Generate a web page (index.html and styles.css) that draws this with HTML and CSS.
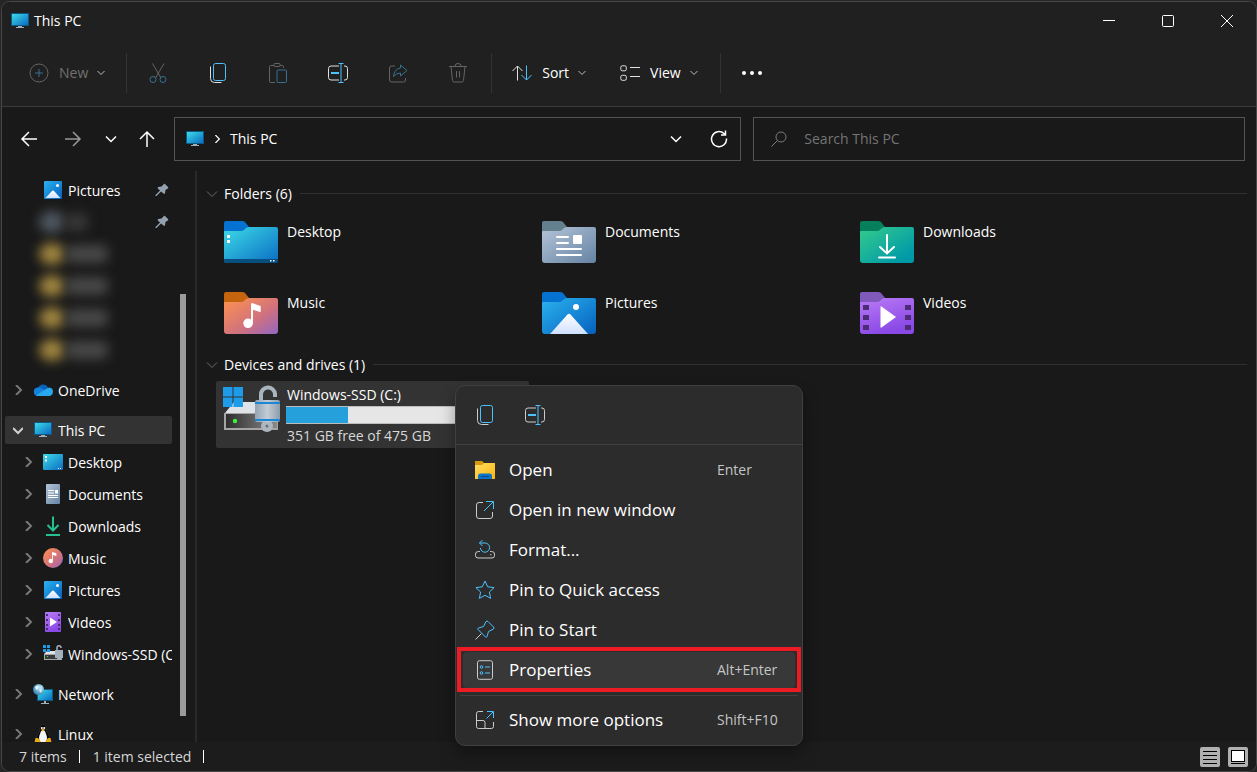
FILE: index.html
```
<!DOCTYPE html>
<html lang="en">
	<head>
		<meta charset="utf-8">
		<title>This PC</title>
		<link rel="stylesheet" href="styles.css">
	</head>
	<body>
		<svg class="sprite" width="0" height="0" aria-hidden="true">
			<defs>
				<linearGradient id="g-screen" x1="0" y1="0" x2="1" y2="1"><stop offset="0" stop-color="#3ddbe6"/><stop offset="1" stop-color="#0a6cc4"/></linearGradient>
				<linearGradient id="g-doc" x1="0" y1="0" x2="1" y2="1"><stop offset="0" stop-color="#b4c4d8"/><stop offset="1" stop-color="#6583a3"/></linearGradient>
				<linearGradient id="g-down" x1="0" y1="0" x2="1" y2="1"><stop offset="0" stop-color="#35cc8c"/><stop offset=".85" stop-color="#0099a8"/></linearGradient>
				<linearGradient id="g-music" x1="0" y1="0" x2="1" y2="1"><stop offset="0" stop-color="#ff944d"/><stop offset=".6" stop-color="#d0717e"/><stop offset="1" stop-color="#9366c4"/></linearGradient>
				<linearGradient id="g-pic" x1="0" y1="0" x2="1" y2="1"><stop offset="0" stop-color="#2bb3f0"/><stop offset="1" stop-color="#0560bd"/></linearGradient>
				<linearGradient id="g-video" x1="0" y1="0" x2=".4" y2="1"><stop offset="0" stop-color="#b97bf5"/><stop offset="1" stop-color="#8a48e6"/></linearGradient>
				<linearGradient id="g-mount" x1="0" y1="0" x2="0" y2="1"><stop offset="0" stop-color="#fff"/><stop offset="1" stop-color="#cfe0ff"/></linearGradient>
				<linearGradient id="g-folder" x1="0" y1="0" x2="1" y2="1"><stop offset="0" stop-color="#ffdc66"/><stop offset="1" stop-color="#fbb60c"/></linearGradient>
				<linearGradient id="g-disk" x1="0" y1="0" x2="1" y2="0"><stop offset="0" stop-color="#2e2e2e"/><stop offset="1" stop-color="#8a8a8a"/></linearGradient>
				<linearGradient id="g-lock" x1="0" y1="0" x2="1" y2="0"><stop offset="0" stop-color="#94a3b3"/><stop offset=".5" stop-color="#c3ccd6"/><stop offset="1" stop-color="#8c9cac"/></linearGradient>
				<radialGradient id="g-globe" cx=".65" cy=".35" r=".7"><stop offset="0" stop-color="#c9ecfb"/><stop offset="1" stop-color="#2f7fb0"/></radialGradient>
			</defs>

			<symbol id="i-pc" viewBox="0 0 18 16">
				<path fill="#0b5a86" d="M0 0h18v13H0z"/>
				<path fill="url(#g-screen)" d="M1 1h16v11H1z"/>
				<path fill="#9fb0bd" d="M7 13h4v1h2v1H5v-1h2z"/>
			</symbol>
			<symbol id="i-chev" viewBox="0 0 8 8"><path d="M.5 2 4 5.500 7.500 2"/></symbol>
			<symbol id="i-right" viewBox="0 0 10 10"><path d="M3 0 8 5 3 10"/></symbol>

			<symbol id="i-new" viewBox="0 0 20 20">
				<circle cx="10" cy="10" r="9"/><path class="b" d="M10 6v8M6 10h8"/>
			</symbol>
			<symbol id="i-cut" viewBox="0 0 20 20">
				<path d="M4.500 .5 13 15M16 .5 7.500 15"/>
				<circle class="b" cx="5" cy="16.500" r="3"/><circle class="b" cx="15" cy="16.500" r="3"/>
			</symbol>
			<symbol id="i-copy" viewBox="0 0 20 20">
				<path d="M2.500 3.500v12q0 4 4 4h7"/><rect class="b" x="5.500" y=".5" width="12" height="17" rx="2"/>
			</symbol>
			<symbol id="i-paste" viewBox="0 0 20 20">
				<path d="M6 2.500H2.500q-1 0-1 1v15q0 1 1 1H7M12 2.500h2.500q1 0 1 1V5M7 .5h4q1 0 1 1v1q0 1-1 1H7q-1 0-1-1v-1q0-1 1-1z"/>
				<rect class="b" x="9" y="7" width="9.500" height="12.500" rx="1"/>
			</symbol>
			<symbol id="i-rename" viewBox="0 0 20 20">
				<path d="M11 3H3Q.5 3 .5 5.500v9Q.5 17 3 17h8M16 3h1q2.500 0 2.500 2.500v9Q19.500 17 17 17h-1"/>
				<path class="b" d="M10.500.5h5M10.500 19.500h5M13 .5v19"/><path class="b" stroke-width="2" d="M3 10h8"/>
			</symbol>
			<symbol id="i-share" viewBox="0 0 20 20">
				<path d="M7 3H3.500Q1.500 3 1.500 5v12q0 2 2 2h12q2 0 2-2v-2"/>
				<path class="b" d="M12.500 2 19 7.500 12.500 13v-3Q8 10 5.500 13.500 6 6 12.500 5z"/>
			</symbol>
			<symbol id="i-trash" viewBox="0 0 20 20">
				<path d="M1 3.500h18M7 3q0-2.500 3-2.500t3 2.500M3 3.500l1.500 14q.2 1.500 1.700 1.500h7.600q1.500 0 1.700-1.500l1.500-14M8.500 8v6.500M11.500 8v6.500"/>
			</symbol>
			<symbol id="i-sort" viewBox="0 0 20 20">
				<path d="M5.500 17.500V3M.5 8l5-5 5 5"/><path class="b" d="M14.500 2.500V17M9.500 12l5 5 5-5"/>
			</symbol>
			<symbol id="i-view" viewBox="0 0 20 20">
				<rect x=".8" y="2.800" width="5.500" height="5" rx="1.500"/><rect x=".8" y="12.300" width="5.500" height="5" rx="1.500"/>
				<path d="M10 4.500h10M10 13.500h10"/>
			</symbol>
			<symbol id="i-dots" viewBox="0 0 20 20">
				<g fill="#fff" stroke="none"><circle cx="2" cy="10" r="2"/><circle cx="10" cy="10" r="2"/><circle cx="18" cy="10" r="2"/></g>
			</symbol>
			<symbol id="i-arrow" viewBox="0 0 18 18"><path d="M17 9H2M9 2 2 9l7 7"/></symbol>
			<symbol id="i-down" viewBox="0 0 14 14"><path d="M2 4.500 7 9.500 12 4.500"/></symbol>
			<symbol id="i-refresh" viewBox="0 0 18 18"><path d="M16.500 8.500A7.500 7.500 0 1 1 14 3.500l1.500 1.500M15.500.5V5H11"/></symbol>
			<symbol id="i-search" viewBox="0 0 16 16"><circle cx="10" cy="6" r="5"/><path d="M6.500 9.500.5 15.500"/></symbol>
			<symbol id="i-pin" viewBox="0 0 14 14">
				<path fill="#93a2ae" d="M8.500 1.500Q9 .5 10 1l3 3q.8 1-.2 1.500L10.500 7 10 10q-.5 1.500-1.500.5L6 8.500 1.500 13H.5v-1L5 7.500 2.800 5.500q-.8-1 .5-1.500l3.200-.5z"/>
			</symbol>

			<!-- folder shapes, the colours come from the tile -->
			<symbol id="i-folder" viewBox="0 0 54 42">
				<path fill="currentColor" d="M0 2q0-2 2-2h16q2 0 3 1l4 5v12H0z"/>
				<path d="M0 11q0-1 1-1h16q2 0 3.500-1.500l1-1Q23 6 25 6h27q2 0 2 2v31q0 3-3 3H3q-3 0-3-3z"/>
			</symbol>
			<symbol id="i-music-note" viewBox="0 0 20 28"><path fill="#fff" d="M9 1q0-1 1-1l9 3v6.500L11 7v14a5 5 0 1 1-2-4z"/></symbol>

			<symbol id="i-desktop" viewBox="0 0 20 16">
				<rect width="20" height="16" rx="1" fill="url(#g-screen)"/><path fill="#fff" d="M2 2h2v2H2zM2 5.500h2v2H2zM15 14h1v1h-1zM17 14h1v1h-1z"/>
			</symbol>
			<symbol id="i-document" viewBox="0 0 20 20">
				<rect x="3" width="14" height="20" rx="1" fill="url(#g-doc)"/>
				<path fill="#fff" d="M5 6h6v1H5zM5 8.500h6v1H5zM5 11h10v1H5zM5 13h10v1H5zM12 6h3v3.500h-3z"/>
			</symbol>
			<symbol id="i-download" viewBox="0 0 20 20">
				<path d="M10 .5V14M4.500 9l5.500 5.500L15.500 9M3 19h14" fill="none" stroke="#25bf92" stroke-width="2"/>
			</symbol>
			<symbol id="i-music" viewBox="0 0 20 20">
				<circle cx="10" cy="10" r="10" fill="url(#g-music)"/><use href="#i-music-note" x="5" y="4" width="9" height="12"/>
			</symbol>
			<symbol id="i-picture" viewBox="0 0 20 20">
				<rect x="1" y="1" width="18" height="18" rx="1" fill="url(#g-pic)"/>
				<path fill="url(#g-mount)" d="M2.500 18 9 11q1-1 2 0l6.500 7z"/><circle cx="14.500" cy="5.500" r="1.500" fill="#fff"/>
			</symbol>
			<symbol id="i-video" viewBox="0 0 20 20">
				<rect x="2" width="16" height="20" rx="1" fill="url(#g-video)"/>
				<path fill="#4a2b78" d="M3 2h2v2H3zM3 7h2v2H3zM3 12h2v2H3zM3 16h2v2H3zM15 2h2v2h-2zM15 7h2v2h-2zM15 12h2v2h-2zM15 16h2v2h-2z"/>
				<path fill="#fff" d="M7 5.500 14 10l-7 4.500z"/>
			</symbol>
			<symbol id="i-cloud" viewBox="0 0 20 14">
				<path fill="#0a62b8" d="M5 5a5.500 5.500 0 0 1 10-.500L13 9H5z"/>
				<path fill="#1482dc" d="M4.500 4.500Q7 4 9 5.500L14 9l-8 4H4.500a4.300 4.300 0 0 1 0-8.500z"/>
				<path fill="#28a8ea" d="M3 12.500 13 6q1.500-1.500 3.500-1.500A4.300 4.300 0 0 1 16 13H4.500Q3.500 13 3 12.500z"/>
			</symbol>
			<symbol id="i-drive" viewBox="0 0 60 50">
				<path fill="#dfe3e7" d="M12 17h38l6 11H3z"/>
				<path fill="#a5a5a5" d="M2 28h54v17H2z"/><path fill="url(#g-disk)" d="M4 29h51v14H4z"/>
				<circle cx="13" cy="36" r="2.200" fill="#3df23a"/>
				<path fill="#1e9be9" d="M1 2h9.500v9.500H1zM11.500 2H21v9.500h-9.500zM1 12.500h9.500V22H1zM11.500 12.500H21V22h-9.500z"/>
				<path fill="none" stroke="#a9b4bf" stroke-width="4" d="M39 15v-5a7 7 0 0 1 14-1v3"/>
				<circle cx="45" cy="41" r="6" fill="#aeb6be"/><circle cx="45" cy="41" r="1.500" fill="#66717c"/>
				<rect x="33" y="15" width="25" height="22" rx="2" fill="url(#g-lock)"/>
				<path fill="#1c87d6" d="M33 17h25v2H33zM33 34h25v2H33z"/>
			</symbol>
			<symbol id="i-drive-small" viewBox="0 0 20 20">
				<path fill="#dfe3e7" d="M4 7h13l2 3H1z"/><path fill="#a5a5a5" d="M1 10h18v6H1z"/><path fill="#3a3a3a" d="M2 11h13v4H2z"/>
				<path fill="#3df23a" d="M4 12h1v1H4z"/>
				<path fill="#1e9be9" d="M0 1h3v3H0zM4 1h3v3H4zM0 5h3v3H0zM4 5h3v3H4z"/>
				<path fill="none" stroke="#a9b4bf" stroke-width="1.500" d="M14 6V4a2 2 0 0 1 4-.500V4"/>
				<path fill="#a3b0bd" d="M12 6h8v8h-8zM14 14h4v2h-4z"/>
			</symbol>
			<symbol id="i-network" viewBox="0 0 20 20">
				<path fill="#0b5a86" d="M4 5h16v12H4z"/><path fill="url(#g-screen)" d="M5 6h14v10H5z"/>
				<path fill="#9fb0bd" d="M11 17h2v2h3v1H8v-1h3z"/><circle cx="5.500" cy="5.500" r="5.500" fill="url(#g-globe)"/>
				<path fill="#e4f6ff" d="M2 3q2-2 4-1L5 5 3 6zM6 6l3-1-1 4z"/>
			</symbol>
			<symbol id="i-linux" viewBox="0 0 20 20">
				<path fill="#050505" stroke="#3c3c3c" stroke-width=".5" d="M10 .5Q13 .5 13 5q0 2 2 4.500 2 3 1.500 7L13 19H7l-3.500-3q0-4 2-6.500T7 5Q7 .5 10 .5z"/>
				<path fill="#f4f4f4" d="M10 6q2 0 3 4 2 4 0 8H7q-2-4 0-8 1-4 3-4z"/><circle cx="8.800" cy="4" r="1" fill="#fff"/><circle cx="11.200" cy="4" r="1" fill="#fff"/>
				<path fill="#e9aa12" d="M8 5.500 10 4.800l2 .7-2 1.800zM2.500 14h2.500l3 4Q7.500 20 5 19.500L1.500 18.500zM17.500 14H15l-3 4q.5 2 3 1.500l3.500-1z"/>
			</symbol>

			<symbol id="i-open" viewBox="0 0 20 20">
				<path fill="#d89a08" d="M0 1h7l2 2h10v6H0z"/><path fill="url(#g-folder)" d="M0 5h7l2-2h11v16H0z"/>
				<path fill="#0f73c8" d="M3 19v-3q0-2.500 2.500-2.500h9Q17 13.500 17 16v3z"/><path fill="#0a4a8c" d="M6 16h8v1H6z"/>
			</symbol>
			<symbol id="i-window" viewBox="0 0 20 20">
				<path d="M8 2.500H4Q1.500 2.500 1.500 5v11q0 2.500 2.500 2.500h11q2.500 0 2.500-2.500v-4"/><path class="b" d="M11 1.500h7.500V9M18 2 9 11"/>
			</symbol>
			<symbol id="i-format" viewBox="0 0 20 20">
				<path d="M5 11.500H3.500Q.5 11.500.5 14v1.500Q.5 18 3 18h14q2.500 0 2.500-2.500V14q0-2.500-3-2.500H15M15 14.800h1.500"/>
				<path class="b" d="M4.500 3H10a4.600 4.600 0 1 1-4.600 5M7.500 0l-3 3 3 3"/>
			</symbol>
			<symbol id="i-star" viewBox="0 0 20 20">
				<path class="b" d="m10 1 2.700 5.800 6.400.8-4.700 4.400 1.200 6.400L10 15.300l-5.600 3.100L5.600 12 .9 7.600l6.400-.8z"/>
			</symbol>
			<symbol id="i-pushpin" viewBox="0 0 20 20">
				<path d="M6.500 13.500.5 19.500"/><path class="b" d="M11 1.500Q12 .5 13 1.500L18.500 7q1 1 0 2l-5 2.500-1.500 5q-.5 1.500-1.500.5L3 9.500Q2 8.500 3.500 8l5-1.500z"/>
			</symbol>
			<symbol id="i-props" viewBox="0 0 20 20">
				<rect x="2.500" y=".7" width="15" height="18.600" rx="2"/>
				<path class="b" d="M10 7h5M10 13h5"/><circle class="b" cx="6.500" cy="7" r="1.300"/><circle class="b" cx="6.500" cy="13" r="1.300"/>
			</symbol>
			<symbol id="i-more" viewBox="0 0 20 20">
				<path d="M8 1.500H3.500q-2 0-2 2v13q0 2 2 2h13q2 0 2-2V12M1.500 10.500H8q2 0 2 2v6"/><path class="b" d="M12 1.500h6.500V8M18 2l-6.500 6.500"/>
			</symbol>
		</svg>

		<div class="window">
			<header class="titlebar">
				<svg class="pc"><use href="#i-pc"/></svg>
				<h1>This PC</h1>
				<div class="window-buttons">
					<button aria-label="Minimize"><svg viewBox="0 0 12 12"><path d="M0 5.500h12"/></svg></button>
					<button aria-label="Maximize"><svg viewBox="0 0 12 12"><rect x=".5" y=".5" width="11" height="11" rx="1"/></svg></button>
					<button aria-label="Close"><svg viewBox="0 0 12 12"><path d="M0 0 12 12M12 0 0 12"/></svg></button>
				</div>
			</header>

			<div class="toolbar">
				<button class="tool-menu new" disabled><svg class="icon"><use href="#i-new"/></svg>New<svg class="chev"><use href="#i-chev"/></svg></button>
				<div class="tool-group">
					<button aria-label="Cut" disabled><svg class="icon"><use href="#i-cut"/></svg></button>
					<button aria-label="Copy"><svg class="icon"><use href="#i-copy"/></svg></button>
					<button aria-label="Paste" disabled><svg class="icon"><use href="#i-paste"/></svg></button>
					<button aria-label="Rename"><svg class="icon"><use href="#i-rename"/></svg></button>
					<button aria-label="Share" disabled><svg class="icon"><use href="#i-share"/></svg></button>
					<button aria-label="Delete" disabled><svg class="icon"><use href="#i-trash"/></svg></button>
				</div>
				<button class="tool-menu"><svg class="icon"><use href="#i-sort"/></svg>Sort<svg class="chev"><use href="#i-chev"/></svg></button>
				<button class="tool-menu"><svg class="icon"><use href="#i-view"/></svg>View<svg class="chev"><use href="#i-chev"/></svg></button>
				<button class="tool-more" aria-label="See more"><svg class="icon"><use href="#i-dots"/></svg></button>
			</div>

			<nav class="navbar">
				<div class="history">
					<button aria-label="Back"><svg><use href="#i-arrow"/></svg></button>
					<button class="forward" aria-label="Forward"><svg><use href="#i-arrow"/></svg></button>
					<button aria-label="Recent locations"><svg class="small"><use href="#i-down"/></svg></button>
					<button class="up" aria-label="Up"><svg><use href="#i-arrow"/></svg></button>
				</div>
				<div class="address">
					<svg class="pc"><use href="#i-pc"/></svg>
					<svg class="crumb-sep"><use href="#i-right"/></svg>
					<a href="#">This PC</a>
					<button aria-label="Previous locations"><svg class="small"><use href="#i-down"/></svg></button>
					<button aria-label="Refresh"><svg><use href="#i-refresh"/></svg></button>
				</div>
				<label class="search">
					<svg><use href="#i-search"/></svg>
					<input type="search" placeholder="Search This PC" aria-label="Search This PC">
				</label>
			</nav>

			<div class="body">
				<aside class="sidebar">
					<ul class="tree">
						<li class="sub"><span class="arrow"></span><svg class="icon"><use href="#i-picture"/></svg><a href="#">Pictures</a><svg class="pin"><use href="#i-pin"/></svg></li>
						<li class="sub hidden-item gray"><span class="blob"></span><span class="smear"></span><svg class="pin"><use href="#i-pin"/></svg></li>
						<li class="sub hidden-item"><span class="blob"></span><span class="smear"></span></li>
						<li class="sub hidden-item"><span class="blob"></span><span class="smear"></span></li>
						<li class="sub hidden-item"><span class="blob"></span><span class="smear"></span></li>
						<li class="sub hidden-item"><span class="blob"></span><span class="smear"></span></li>
						<li class="root"><svg class="arrow"><use href="#i-right"/></svg><svg class="icon"><use href="#i-cloud"/></svg><a href="#">OneDrive</a></li>
						<li class="root selected"><svg class="arrow open"><use href="#i-right"/></svg><svg class="icon"><use href="#i-pc" x="1" y="2" width="18" height="16"/></svg><a href="#">This PC</a></li>
						<li class="sub"><svg class="arrow"><use href="#i-right"/></svg><svg class="icon"><use href="#i-desktop"/></svg><a href="#">Desktop</a></li>
						<li class="sub"><svg class="arrow"><use href="#i-right"/></svg><svg class="icon"><use href="#i-document"/></svg><a href="#">Documents</a></li>
						<li class="sub"><svg class="arrow"><use href="#i-right"/></svg><svg class="icon"><use href="#i-download"/></svg><a href="#">Downloads</a></li>
						<li class="sub"><svg class="arrow"><use href="#i-right"/></svg><svg class="icon"><use href="#i-music"/></svg><a href="#">Music</a></li>
						<li class="sub"><svg class="arrow"><use href="#i-right"/></svg><svg class="icon"><use href="#i-picture"/></svg><a href="#">Pictures</a></li>
						<li class="sub"><svg class="arrow"><use href="#i-right"/></svg><svg class="icon"><use href="#i-video"/></svg><a href="#">Videos</a></li>
						<li class="sub"><svg class="arrow"><use href="#i-right"/></svg><svg class="icon"><use href="#i-drive-small"/></svg><a href="#">Windows-SSD (C:)</a></li>
						<li class="root"><svg class="arrow"><use href="#i-right"/></svg><svg class="icon"><use href="#i-network"/></svg><a href="#">Network</a></li>
						<li class="root"><svg class="arrow"><use href="#i-right"/></svg><svg class="icon"><use href="#i-linux"/></svg><a href="#">Linux</a></li>
					</ul>
					<div class="scrollbar"><div class="thumb"></div></div>
				</aside>

				<main class="content">
					<h2><svg><use href="#i-down"/></svg>Folders (6)</h2>
					<div class="tiles">
						<a class="tile desktop" href="#">
							<svg viewBox="0 0 54 42"><use href="#i-folder"/><path fill="#084f80" d="M0 38h54v1q0 3-3 3H3q-3 0-3-3z"/><path fill="#fff" d="M3 14h3v3H3zM3 19h3v3H3zM46 39h1.500v1.500H46zM49 39h1.500v1.500H49z"/></svg>
							<span>Desktop</span>
						</a>
						<a class="tile documents" href="#">
							<svg viewBox="0 0 54 42"><use href="#i-folder"/><path stroke="#fff" stroke-width="2" stroke-linecap="round" d="M15 16h11M15 22h11M15 28h24M15 34h24"/><rect x="31" y="14" width="9" height="9" rx="1" fill="#fff"/></svg>
							<span>Documents</span>
						</a>
						<a class="tile downloads" href="#">
							<svg viewBox="0 0 54 42"><use href="#i-folder"/><path fill="none" stroke="#fff" stroke-width="2" stroke-linecap="round" d="M27 14v18M20 26l7 6.500 7-6.500M19 36.500h16"/></svg>
							<span>Downloads</span>
						</a>
						<a class="tile music" href="#">
							<svg viewBox="0 0 54 42"><use href="#i-folder"/><use href="#i-music-note" x="18" y="11" width="20" height="27"/></svg>
							<span>Music</span>
						</a>
						<a class="tile pictures" href="#">
							<svg viewBox="0 0 54 42"><use href="#i-folder"/><path fill="url(#g-mount)" d="M8 42 25.500 22.500q1.500-1.500 3 0L46 42z"/><circle cx="34" cy="15" r="3" fill="#fff"/></svg>
							<span>Pictures</span>
						</a>
						<a class="tile videos" href="#">
							<svg viewBox="0 0 54 42"><use href="#i-folder"/><path fill="#4c2d75" d="M3 13h6v5H3zM3 23h6v5H3zM3 33h6v5H3zM45 13h6v5h-6zM45 23h6v5h-6zM45 33h6v5h-6z"/><path fill="#fff" d="M20.500 15Q20.500 14 21.500 14.500L36 25 21.500 35.500q-1 .5-1-.5z"/></svg>
							<span>Videos</span>
						</a>
					</div>
					<h2><svg><use href="#i-down"/></svg>Devices and drives (1)</h2>
					<div class="tiles">
						<a class="drive" href="#">
							<svg><use href="#i-drive"/></svg>
							<div class="drive-info">
								<span>Windows-SSD (C:)</span>
								<div class="usage"><div class="used" style="width: 26%"></div></div>
								<span class="free">351 GB free of 475 GB</span>
							</div>
						</a>
					</div>
				</main>
			</div>

			<footer class="status">
				<span>7 items</span>
				<span>1 item selected</span>
				<div class="layouts">
					<button aria-label="Details"><svg viewBox="0 0 20 20"><path d="M3 4.500h14M3 8.500h14M3 12.500h14M3 16.500h14"/></svg></button>
					<button aria-label="Large icons"><svg viewBox="0 0 20 20"><rect x="3.500" y="3.500" width="13" height="11" fill="#fff"/><path d="M3 16.500h14"/></svg></button>
				</div>
			</footer>

			<div class="menu" role="menu">
				<div class="menu-icons">
					<button aria-label="Copy"><svg class="icon"><use href="#i-copy"/></svg></button>
					<button aria-label="Rename"><svg class="icon"><use href="#i-rename"/></svg></button>
				</div>
				<button class="item"><svg class="icon"><use href="#i-open"/></svg><span>Open</span><kbd>Enter</kbd></button>
				<button class="item"><svg class="icon"><use href="#i-window"/></svg><span>Open in new window</span></button>
				<button class="item"><svg class="icon"><use href="#i-format"/></svg><span>Format...</span></button>
				<button class="item"><svg class="icon"><use href="#i-star"/></svg><span>Pin to Quick access</span></button>
				<button class="item"><svg class="icon"><use href="#i-pushpin"/></svg><span>Pin to Start</span></button>
				<button class="item marked"><svg class="icon"><use href="#i-props"/></svg><span>Properties</span><kbd>Alt+Enter</kbd></button>
				<hr>
				<button class="item"><svg class="icon"><use href="#i-more"/></svg><span>Show more options</span><kbd>Shift+F10</kbd></button>
			</div>
		</div>
	</body>
</html>
```

FILE: styles.css
```
* {
	box-sizing: border-box;
}
body {
	margin: 0;
	background-color: #262626;
	color: #fff;
	font-family: "Open Sans", "Noto Sans", sans-serif;
	font-size: 14px;
	line-height: 20px;
}
.sprite {
	position: absolute;
}
svg {
	display: block;
	flex: none;
	fill: none;
	stroke: currentColor;
}
.b {
	stroke: #4cc2ff;
}
h1, h2 {
	margin: 0;
	font-size: inherit;
	font-weight: normal;
}
a {
	color: inherit;
	text-decoration: none;
}
button {
	background: none;
	border: 0;
	color: inherit;
	display: flex;
	align-items: center;
	justify-content: center;
	font: inherit;
	padding: 0;
}
button:disabled {
	color: #707070;
}
button:disabled .icon {
	opacity: 0.5;
	color: #a8a8a8;
}
.icon {
	width: 20px;
	height: 20px;
	color: #e0e0e0;
}
.pc {
	width: 18px;
	height: 16px;
	stroke: none;
}

.window {
	position: relative;
	display: flex;
	flex-direction: column;
	height: calc(100vh - 1px);
	margin: 1px 0 0 1px;
	background-color: #191919;
	border: 1px solid #474747;
	border-radius: 9px;
	overflow: hidden;
}

.titlebar {
	display: flex;
	align-items: center;
	gap: 5px;
	height: 38px;
	padding-left: 9px;
	background-color: #202020;
}
.window-buttons {
	display: flex;
	margin-left: auto;
}
.window-buttons button {
	width: 59px;
	height: 38px;
}
.window-buttons svg {
	width: 12px;
	height: 12px;
}

.toolbar {
	display: flex;
	align-items: center;
	height: 67px;
	padding-left: 18px;
	background-color: #202020;
	border-bottom: 1px solid #3a3a3a;
}
.tool-menu {
	gap: 10px;
	height: 40px;
	padding: 0 14px 0 20px;
}
.tool-menu.new {
	padding: 0 21px 0 9px;
}
.chev {
	width: 8px;
	height: 8px;
	color: #bbb;
	margin-left: -1px;
}
.tool-group {
	display: flex;
	gap: 20px;
	padding: 0 13px 0 11px;
	border: 1px solid #333;
	border-width: 0 1px;
}
.tool-group button {
	width: 40px;
	height: 40px;
}
.tool-more {
	height: 40px;
	margin-left: 8px;
	padding: 0 21px;
	border-left: 1px solid #333;
}

.navbar {
	display: grid;
	grid-template-columns: auto 15fr 13fr;
	gap: 12px;
	padding: 10px 11px 10px 10px;
}
.history {
	display: grid;
	grid-template-columns: 34px 34px 22px 30px;
	gap: 10px;
}
.navbar svg {
	width: 18px;
	height: 18px;
	stroke-width: 1.5;
}
.navbar .pc {
	height: 16px;
	stroke: none;
}
.navbar svg.small {
	width: 14px;
	height: 14px;
}
.forward {
	color: #999;
}
.forward svg {
	transform: scaleX(-1);
}
.up svg {
	transform: rotate(90deg);
}
.address, .search {
	display: flex;
	align-items: center;
	min-width: 0;
	height: 44px;
	border: 1px solid #535353;
}
.address {
	padding-left: 11px;
}
.address .crumb-sep {
	width: 8px;
	height: 8px;
	margin: 0 9px;
}
.address a {
	flex: 1;
}
.address button {
	width: 43px;
	height: 42px;
}
.search {
	gap: 17px;
	padding: 0 17px;
	color: #7a7a7a;
}
.search svg {
	width: 16px;
	height: 16px;
	stroke-width: 1;
}
.search input {
	flex: 1;
	min-width: 0;
	background: none;
	border: 0;
	outline: 0;
	padding: 0;
	color: #fff;
	font: inherit;
}
.search input::placeholder {
	color: #757575;
}

.body {
	display: flex;
	flex: 1;
	min-height: 0;
}
.sidebar {
	display: flex;
	width: 195px;
	padding: 3px 9px 0 3px;
	border-right: 2px solid #292929;
	overflow: hidden;
}
.tree {
	flex: 1;
	min-width: 0;
	margin: 0 8px 0 0;
	padding: 0;
	list-style: none;
}
.tree li {
	display: flex;
	align-items: center;
	gap: 5px;
	height: 32px;
	padding-left: 8px;
}
.tree .sub {
	padding-left: 18px;
}
.tree .root {
	margin-top: 8px;
}
.tree a {
	flex: 1;
	padding-top: 2px;
	overflow: hidden;
	white-space: nowrap;
}
.tree .icon {
	stroke: none;
}
.tree .arrow {
	flex: none;
	width: 10px;
	height: 10px;
	margin-right: 5px;
	color: #787878;
	stroke-width: 2;
}
.tree .open {
	color: #d0d0d0;
	transform: rotate(90deg);
}
.tree .selected {
	height: 28px;
	margin: 10px 0 2px;
	background-color: #333;
	border-radius: 2px;
}
.pin {
	width: 14px;
	height: 14px;
	margin-right: 3px;
	stroke: none;
}
.hidden-item .blob {
	width: 26px;
	height: 22px;
	margin-left: 16px;
	background-color: #a0853f;
	border-radius: 50%;
	filter: blur(6px);
}
.hidden-item .smear {
	width: 42px;
	height: 18px;
	margin-left: -4px;
	background-color: #484848;
	border-radius: 6px;
	filter: blur(6px);
}
.hidden-item .pin {
	margin-left: auto;
}
.gray .blob {
	background-color: #4f5860;
}
.gray .smear {
	width: 22px;
	background-color: #383838;
}
.scrollbar {
	width: 6px;
	padding: 120px 0 26px;
}
.thumb {
	height: 100%;
	background-color: #9a9a9a;
}

.content {
	flex: 1;
	padding: 6px 9px 0 8px;
}
.content h2 {
	display: flex;
	align-items: center;
	gap: 5px;
	height: 33px;
}
.content h2 svg {
	width: 14px;
	height: 14px;
	color: #6a6a6a;
}
.content h2:after {
	content: "";
	flex: 1;
	height: 1px;
	margin-left: 3px;
	background-color: #303030;
}
.tiles {
	display: grid;
	grid-template-columns: repeat(auto-fill, 313px);
	gap: 4px 5px;
	padding-left: 11px;
}
.tile {
	display: flex;
	gap: 9px;
	height: 67px;
	padding: 11px 8px 0;
}
.tile span {
	padding-top: 1px;
}
.tile svg {
	width: 54px;
	height: 42px;
	stroke: none;
}
.desktop svg { color: #0571d0; fill: url(#g-screen); }
.documents svg { color: #64808f; fill: url(#g-doc); }
.downloads svg { color: #067f5c; fill: url(#g-down); }
.music svg { color: #c4640f; fill: url(#g-music); }
.pictures svg { color: #0571d0; fill: url(#g-pic); }
.videos svg { color: #8059bd; fill: url(#g-video); }

.drive {
	display: flex;
	gap: 4px;
	height: 67px;
	padding: 4px 6px 0;
	background-color: #333;
	border-radius: 2px;
}
.drive svg {
	width: 60px;
	height: 50px;
	stroke: none;
}
.drive-info {
	flex: 1;
}
.drive-info span {
	display: block;
	padding-left: 1px;
}
.usage {
	height: 18px;
	margin: 1px 0 2px;
	background-color: #e6e6e6;
	border: 1px solid #bcbcbc;
	border-width: 1px 0;
}
.used {
	height: 100%;
	background-color: #26a0da;
}
.drive-info .free {
	color: #d8d8d8;
}

.status {
	display: flex;
	align-items: center;
	height: 29px;
	padding: 0 8px 0 17px;
	background-color: #1c1c1c;
	color: #d6d6d6;
}
.status span {
	display: flex;
	align-items: center;
	margin-right: 13px;
}
.status span:after {
	content: "";
	width: 1px;
	height: 13px;
	margin-left: 12px;
	background-color: #fff;
}
.layouts {
	display: flex;
	gap: 8px;
	margin-left: auto;
}
.layouts button {
	width: 20px;
	height: 20px;
	background-color: #b0b0b0;
	border-radius: 2px;
	color: #000;
}
.layouts svg {
	width: 20px;
	height: 20px;
}

.menu {
	position: absolute;
	left: 453px;
	top: 383px;
	width: 348px;
	padding-bottom: 3px;
	background-color: #2c2c2c;
	border: 1px solid #404040;
	border-radius: 10px;
	box-shadow: 0 8px 16px rgba(0, 0, 0, 0.35);
}
.menu .icon {
	color: #ccc;
}
.menu-icons {
	display: flex;
	gap: 10px;
	padding: 9px;
	margin-bottom: 7px;
	border-bottom: 1px solid #404040;
}
.menu-icons button {
	width: 40px;
	height: 40px;
}
.item {
	position: relative;
	display: grid;
	grid-template-columns: 20px 1fr 78px;
	gap: 14px;
	width: calc(100% - 14px);
	height: 36px;
	margin: 2px 7px 4px;
	padding-left: 12px;
	border-radius: 4px;
	font-size: 17px;
	text-align: left;
}
.item kbd {
	color: #c5c5c5;
	font-family: inherit;
	font-size: 14px;
}
.item use[href="#i-open"] {
	stroke: none;
}
.marked {
	background-color: #383838;
}
.marked:after {
	content: "";
	position: absolute;
	inset: -5px -6px -4px;
	border: 4px solid #ed1c24;
}
.menu hr {
	margin: 7px 4px 6px;
	border: 0;
	border-top: 1px solid #404040;
}
```
